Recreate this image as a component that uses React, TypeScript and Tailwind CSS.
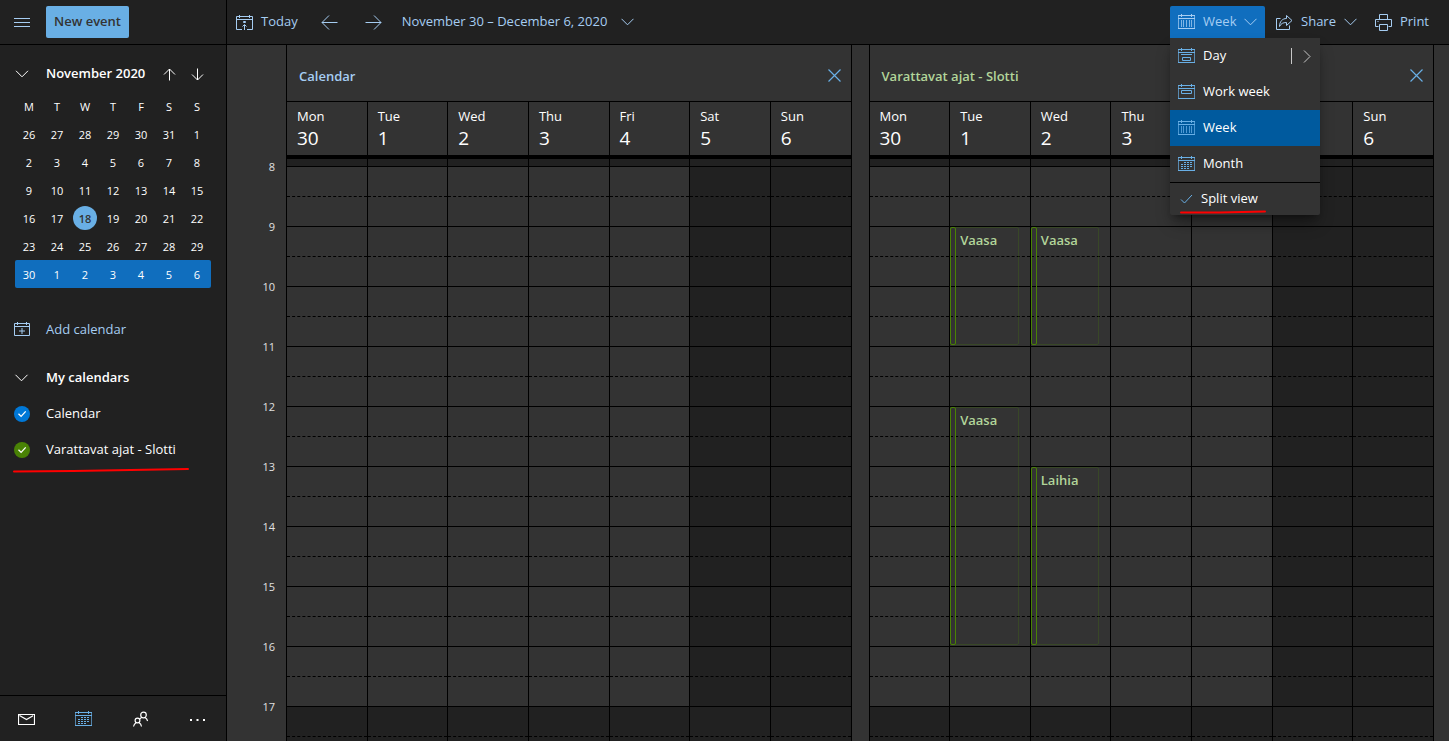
import type { ReactNode } from "react";

const BLUE = "#69afe5";

const weekDays = [
  { name: "Mon", date: 30 },
  { name: "Tue", date: 1 },
  { name: "Wed", date: 2 },
  { name: "Thu", date: 3 },
  { name: "Fri", date: 4 },
  { name: "Sat", date: 5, weekend: true },
  { name: "Sun", date: 6, weekend: true },
];

const hours = [8, 9, 10, 11, 12, 13, 14, 15, 16, 17];

const monthRows = [
  [26, 27, 28, 29, 30, 31, 1],
  [2, 3, 4, 5, 6, 7, 8],
  [9, 10, 11, 12, 13, 14, 15],
  [16, 17, 18, 19, 20, 21, 22],
  [23, 24, 25, 26, 27, 28, 29],
  [30, 1, 2, 3, 4, 5, 6],
];

type CalEvent = { day: number; start: number; end: number; title: string };

const slottiEvents: CalEvent[] = [
  { day: 1, start: 9, end: 11, title: "Vaasa" },
  { day: 2, start: 9, end: 11, title: "Vaasa" },
  { day: 1, start: 12, end: 16, title: "Vaasa" },
  { day: 2, start: 13, end: 16, title: "Laihia" },
];

function Icon({
  children,
  size = 17,
  color = "currentColor",
}: {
  children: ReactNode;
  size?: number;
  color?: string;
}) {
  return (
    <svg
      width={size}
      height={size}
      viewBox={`0 0 ${size} ${size}`}
      fill="none"
      stroke={color}
      strokeWidth="1"
      className="shrink-0"
      aria-hidden="true"
    >
      {children}
    </svg>
  );
}

const CalendarFrame = () => (
  <>
    <path d="M.5 1.5v13M16.5 1.5v13" strokeOpacity="0.7" />
    <path d="M0 1.5h17M0 4.5h17M0 14.5h17M3.5 0v3M13.5 0v3" />
  </>
);

const DayIcon = () => (
  <Icon color={BLUE}>
    <CalendarFrame />
    <path d="M3 6.500h11M4.500 9.500h8v3h-8z" />
  </Icon>
);

const WorkWeekIcon = () => (
  <Icon color={BLUE}>
    <CalendarFrame />
    <path d="M3.500 6.500h10v3h-10z" />
  </Icon>
);

const WeekIcon = ({ color = BLUE }: { color?: string }) => (
  <Icon color={color}>
    <CalendarFrame />
    <path d="M3.500 6v7M5.500 6v7M8.500 6v7M11.500 6v7M13.500 6v7" strokeOpacity="0.75" />
  </Icon>
);

const MonthIcon = () => (
  <Icon color={BLUE}>
    <CalendarFrame />
    <path
      d="M6 6.500h8M3 8.500h11M3 10.500h11M3 12.500h8"
      strokeDasharray="2 1"
    />
  </Icon>
);

const ChevronDown = ({ size = 13 }: { size?: number }) => (
  <svg
    width={size}
    height="8"
    viewBox="0 0 13 8"
    fill="none"
    stroke="currentColor"
    className="shrink-0"
    aria-hidden="true"
  >
    <path d="M.5 .8l6 6 6-6" />
  </svg>
);

function MiniCalendar() {
  return (
    <section className="px-[15px] pt-[11px]">
      <div className="flex h-9 items-center text-white">
        <button aria-label="Collapse month" className="w-[31px]">
          <ChevronDown size={14} />
        </button>
        <h2 className="flex-1 text-[13px] font-semibold whitespace-nowrap">
          November 2020
        </h2>
        <button aria-label="Previous month" className="flex w-7 justify-center">
          <Icon size={13}>
            <path d="M6.5 12.5V1M1 6.5l5.5-5.5L12 6.5" />
          </Icon>
        </button>
        <button aria-label="Next month" className="flex w-7 justify-center">
          <Icon size={13}>
            <path d="M6.5 .5V12M1 6.5L6.5 12 12 6.5" />
          </Icon>
        </button>
      </div>
      <table className="w-[196px] table-fixed border-collapse text-center text-[11px] text-white">
        <thead>
          <tr className="h-7">
            {["M", "T", "W", "T", "F", "S", "S"].map((d, i) => (
              <th key={i} className="p-0 pt-0.5 font-normal">
                {d}
              </th>
            ))}
          </tr>
        </thead>
        <tbody>
          {monthRows.map((row, r) => (
            <tr key={r} className="h-7">
              {row.map((day, i) => {
                const current = r === 5;
                const today = day === 18;
                return (
                  <td
                    key={i}
                    className={`p-0 ${current ? "bg-[#106ebe] first:rounded-l-xs last:rounded-r-xs" : ""}`}
                  >
                    <span
                      className={`mx-auto flex size-6 items-center justify-center rounded-full pt-0.5 ${today ? "bg-[#69afe5] font-semibold text-[#333]" : ""}`}
                    >
                      {day}
                    </span>
                  </td>
                );
              })}
            </tr>
          ))}
        </tbody>
      </table>
    </section>
  );
}

function CalendarToggle({ id, label, tone }: { id: string; label: string; tone: string }) {
  return (
    <div className="flex h-9 items-center gap-4">
      <span className="relative flex size-4">
        <input
          id={id}
          type="checkbox"
          defaultChecked
          className={`size-4 appearance-none rounded-full ${tone}`}
        />
        <svg
          viewBox="0 0 16 16"
          className="pointer-events-none absolute inset-0"
          fill="none"
          stroke="#fff"
          strokeWidth="1.3"
          aria-hidden="true"
        >
          <path d="M4.5 7.8l2.6 2.6 4.6-5" />
        </svg>
      </span>
      <label htmlFor={id} className="text-[13px] text-white">
        {label}
      </label>
    </div>
  );
}

function Sidebar() {
  return (
    <aside className="flex w-[227px] shrink-0 flex-col border-r border-black bg-[#212121]">
      <div className="flex h-[45px] shrink-0 items-center gap-4 border-b border-black pl-[14px]">
        <button aria-label="Menu" className="text-[#a6cdf2]">
          <Icon size={16}>
            <path d="M0 4.500h16M0 8.500h16M0 12.500h16" />
          </Icon>
        </button>
        <button className="h-8 rounded-xs bg-[#69afe5] px-2 text-[13px] font-semibold text-[#333]">
          New event
        </button>
      </div>
      <div className="min-h-0 flex-1 overflow-hidden">
        <MiniCalendar />
        <div className="relative mt-6 pl-[14px]">
          <button className="flex h-9 items-center gap-4 text-[13px] text-[#a6cdf2]">
            <Icon size={16}>
              <path d="M.5 1.500h15v12H.5zM.5 4.500h15M3.500 0v3M12.500 0v3M8 6v6M5 9h6" />
            </Icon>
            Add calendar
          </button>
          <button className="mt-3 flex h-9 items-center gap-[17px] text-[13px] font-semibold text-white">
            <ChevronDown size={15} />
            My calendars
          </button>
          <CalendarToggle id="cal-main" label="Calendar" tone="bg-[#0078d7]" />
          <CalendarToggle id="cal-slotti" label="Varattavat ajat - Slotti" tone="bg-[#498205]" />
          <svg
            width="176"
            height="6"
            className="absolute -bottom-[5px] left-[13px]"
            fill="none"
            aria-hidden="true"
          >
            <path d="M1 4.500L60 4 175 2" stroke="#f00" strokeWidth="2" strokeLinecap="round" />
          </svg>
        </div>
      </div>
      <nav className="flex h-[46px] shrink-0 items-center gap-10 border-t border-black pt-0.5 pl-[18px] text-white">
        <a href="#mail" aria-label="Mail">
          <Icon>
            <path d="M.5 3.500h16v10H.5zM1.500 4.500l7 4 7-4" strokeWidth="1.2" />
          </Icon>
        </a>
        <a href="#calendar" aria-label="Calendar">
          <MonthIcon />
        </a>
        <a href="#people" aria-label="People">
          <Icon>
            <g strokeWidth="1.2">
              <circle cx="11.5" cy="4" r="2.8" />
              <circle cx="5.5" cy="9.5" r="2.4" />
              <path d="M1.500 15.500c.3-2 1.500-3 2.700-4M6.900 11.500c1.300.8 2.300 2 2.600 4M13 6.500c1.300.7 2.200 2 2.600 3.500M9.800 6.200C8.700 6.900 8 7.500 7.500 8.300" />
            </g>
          </Icon>
        </a>
        <button aria-label="More apps">
          <Icon>
            <path d="M1 9h2M7.500 9h2M14 9h2" strokeWidth="2" />
          </Icon>
        </button>
      </nav>
    </aside>
  );
}

const menuItem =
  "flex h-9 w-full items-center gap-2 px-2 text-left text-[13px] text-white";

function ViewMenu() {
  return (
    <div className="absolute top-8 left-0 z-10 w-[150px] rounded-b-xs bg-[#333] shadow-lg shadow-black/40">
      <div className="flex items-center">
        <button className={menuItem}>
          <DayIcon />
          Day
        </button>
        <button
          aria-label="Number of days"
          className="flex h-4 shrink-0 items-center border-l border-[#c8c8c8] pr-[9px] pl-[11px] text-[#c8c8c8]"
        >
          <svg width="8" height="13" fill="none" stroke="currentColor" aria-hidden="true">
            <path d="M1 .5l6 6-6 6" />
          </svg>
        </button>
      </div>
      <button className={menuItem}>
        <WorkWeekIcon />
        Work week
      </button>
      <button className={`${menuItem} bg-[#005a9e]`}>
        <WeekIcon />
        Week
      </button>
      <button className={menuItem}>
        <MonthIcon />
        Month
      </button>
      <button className="relative flex h-[33px] w-full items-center gap-2 border-t border-black pl-[10px] text-[13px] text-white">
        <Icon size={13} color={BLUE}>
          <path d="M1 6.500l3.500 3.500L12 2" />
        </Icon>
        Split view
        <svg
          width="86"
          height="4"
          className="absolute bottom-px left-[10px]"
          fill="none"
          aria-hidden="true"
        >
          <path d="M1 2.500L40 2.500 85 1.500" stroke="#f00" strokeWidth="2" strokeLinecap="round" />
        </svg>
      </button>
    </div>
  );
}

function Toolbar() {
  return (
    <header className="flex h-[45px] shrink-0 items-center border-b border-black bg-[#212121] pr-5 pl-[9px] text-[13px] text-[#a6cdf2]">
      <button className="flex items-center gap-2">
        <Icon>
          <path d="M6 15.500H.5v-13h16v13H11M.5 5.500h16M3.500 1v3M13.500 1v3M8.500 16v-5M6.500 12.500l2-2 2 2M7.500 7.500h2v1h-2z" />
        </Icon>
        Today
      </button>
      <button aria-label="Previous week" className="ml-[23px]">
        <Icon>
          <path d="M16.500 8.500H1M8 1.500l-7 7 7 7" />
        </Icon>
      </button>
      <button aria-label="Next week" className="ml-[27px]">
        <Icon>
          <path d="M.5 8.500H16M9 1.500l7 7-7 7" />
        </Icon>
      </button>
      <button className="ml-5 flex items-center gap-[14px] whitespace-nowrap">
        November 30 – December 6, 2020
        <ChevronDown />
      </button>
      <div className="relative ml-auto">
        <button
          aria-expanded="true"
          className="flex h-8 w-[95px] items-center gap-2 rounded-t-xs bg-[#106ebe] px-2"
        >
          <WeekIcon color="#a6cdf2" />
          <span className="flex-1 text-left">Week</span>
          <ChevronDown />
        </button>
        <ViewMenu />
      </div>
      <button className="ml-[11px] flex items-center gap-2">
        <Icon>
          <path d="M4.500 4.500H.5v11h13v-4M10.500 1.500l5.500 5-5.500 5v-3C7 8.500 5 9.500 3.500 12.500c0-5 3-8 7-8z" />
        </Icon>
        Share
        <ChevronDown />
      </button>
      <button className="ml-[18px] flex items-center gap-2">
        <Icon>
          <path d="M3.500 12.500h-3v-7h16v7h-3M4.500 5.500v-5h8v5M4.500 10.500h8v6h-8zM2.500 7.500h1" />
        </Icon>
        Print
      </button>
    </header>
  );
}

function WeekPanel({
  title,
  tone,
  events = [],
}: {
  title: string;
  tone: string;
  events?: CalEvent[];
}) {
  return (
    <section className="flex min-w-0 flex-1 flex-col border-l border-black">
      <div className="flex h-[57px] shrink-0 items-center justify-between border-r border-b border-black pt-1 pr-[10px] pl-3">
        <h3 className={`pt-[3px] text-[13px] font-semibold ${tone}`}>{title}</h3>
        <button aria-label={`Close ${title}`}>
          <Icon size={13} color={BLUE}>
            <path d="M.5 .5l12 12M12.500 .5l-12 12" strokeWidth="1.2" />
          </Icon>
        </button>
      </div>
      <div className="grid shrink-0 grid-cols-7 border-b-4 border-black text-white">
        {weekDays.map(({ name, date }) => (
          <div key={name} className="h-[53px] border-r border-black pt-1 pl-[10px]">
            <p className="text-[13px] leading-5">{name}</p>
            <p className="text-[19px] leading-6">{date}</p>
          </div>
        ))}
      </div>
      <div className="grid min-h-0 flex-1 grid-cols-7 overflow-hidden">
        {weekDays.map(({ name, weekend }, i) => (
          <div key={name} className="relative border-r border-black">
            {/* tail of the hour scrolled out of view */}
            <div className="h-[7px] bg-[#212121]" />
            {hours.map((hour) => (
              <div
                key={hour}
                className={`h-[60px] border-t border-black ${weekend || hour >= 17 ? "bg-[#212121]" : ""}`}
              >
                <div className="mt-[29px] border-t border-dashed border-black" />
              </div>
            ))}
            {events
              .filter((e) => e.day === i)
              .map((e) => (
                <article
                  key={e.start}
                  className="absolute left-0 flex w-[86%] rounded-xs border border-[#498205]/25"
                  style={{
                    top: 8 + (e.start - 8) * 60,
                    height: (e.end - e.start) * 60 - 2,
                  }}
                >
                  <span className="-m-px w-[6px] shrink-0 rounded-xs border border-[#498205]" />
                  <h4 className="pt-0.5 pl-[5px] text-[13px] leading-5 font-semibold text-[#b2d59a]">
                    {e.title}
                  </h4>
                </article>
              ))}
          </div>
        ))}
      </div>
    </section>
  );
}

export default function App() {
  return (
    <div className="flex h-screen overflow-hidden bg-[#333] font-['Open_Sans',sans-serif]">
      <Sidebar />
      <div className="flex min-w-0 flex-1 flex-col">
        <Toolbar />
        <main className="flex min-h-0 flex-1 overflow-hidden pr-[15px]">
          <div className="w-[59px] shrink-0 pt-[92px] pr-[11px] text-right text-[11px] text-[#e0e0e0]">
            {hours.map((hour) => (
              <div key={hour} className="flex h-[60px] items-center justify-end">
                {hour}
              </div>
            ))}
          </div>
          <div className="flex min-w-0 flex-1 gap-[17px]">
            <WeekPanel title="Calendar" tone="text-[#a6cdf2]" />
            <WeekPanel
              title="Varattavat ajat - Slotti"
              tone="text-[#b2d59a]"
              events={slottiEvents}
            />
          </div>
        </main>
      </div>
    </div>
  );
}
